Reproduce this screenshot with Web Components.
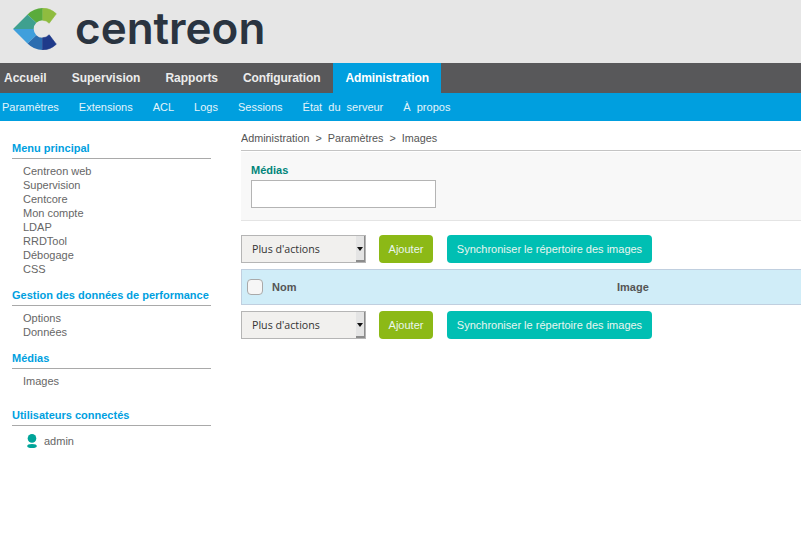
<!DOCTYPE html>
<html>
<head>
<meta charset="utf-8">
<title>Centreon</title>
<style>
    html, body { margin: 0; padding: 0; background: #fff; overflow: hidden; }
    body { font-family: "Liberation Sans", Arial, sans-serif; font-size: 11px; color: #4f4f4f; width: 801px; height: 545px; }
</style>
</head>
<body>
<app-shell>
    <brand-header slot="top"></brand-header>
    <main-nav slot="top"
        items="Accueil|Supervision|Rapports|Configuration|Administration" active="Administration"
        subitems="Paramètres|Extensions|ACL|Logs|Sessions|État  du  serveur|À  propos"></main-nav>
    <side-menu slot="side">
        <menu-group title="Menu principal" items="Centreon web|Supervision|Centcore|Mon compte|LDAP|RRDTool|Débogage|CSS"></menu-group>
        <menu-group title="Gestion des données de performance" items="Options|Données"></menu-group>
        <menu-group title="Médias" items="Images"></menu-group>
        <menu-group class="users" title="Utilisateurs connectés"><user-line>admin</user-line></menu-group>
    </side-menu>
    <media-page slot="main"></media-page>
</app-shell>

<script>
class AppShell extends HTMLElement {
    constructor() {
        super()
        this.attachShadow({ mode: 'open' }).innerHTML = `
            <style>
                :host { display: block; }
                .body { display: grid; grid-template-columns: 241px 560px; }
            </style>
            <slot name="top"></slot>
            <div class="body">
                <slot name="side"></slot>
                <slot name="main"></slot>
            </div>
        `
    }
}

class BrandHeader extends HTMLElement {
    constructor() {
        super()
        this.attachShadow({ mode: 'open' }).innerHTML = `
            <style>
                :host { display: flex; align-items: center; height: 63px; background: #e6e6e6; box-sizing: border-box; padding-left: 13px; }
                svg { display: block; width: 44px; height: 42px; margin-top: -5px; }
                span {
                    margin-left: 18px; margin-top: -8px;
                    font: 600 44px/1 "Inter", "Noto Sans", sans-serif;
                    letter-spacing: 0; color: #2a3440;
                }
            </style>
            <svg viewBox="13 8 44 42">
                <path fill="#8fbc3f" stroke="#8fbc3f" stroke-width=".6" stroke-linejoin="round" d="M42.5 8 A21 21 0 0 1 56.3 13.8 L49.2 23.2 A8.8 8.8 0 0 0 42.5 20.2 Z"/>
                <path fill="#5aab3c" d="M42.5 8 L42.5 20.2 A8.8 8.8 0 0 0 36.3 22.8 L27.5 14.5 Q34 8 42.5 8 Z"/>
                <path fill="#3fa08f" d="M27.5 14.5 L36.3 22.8 A8.8 8.8 0 0 0 33.7 29 L13 29 Z"/>
                <path fill="#3f9fdc" d="M13 29 L33.7 29 A8.8 8.8 0 0 0 36.3 35.2 L27.5 43.5 Z"/>
                <path fill="#2b6db0" d="M27.5 43.5 L36.3 35.2 A8.8 8.8 0 0 0 42.5 37.8 L42.5 50 Q34 50 27.5 43.5 Z"/>
                <path fill="#1f3a8a" stroke="#1f3a8a" stroke-width=".6" stroke-linejoin="round" d="M42.5 50 A21 21 0 0 0 56.3 44.2 L49.2 34.8 A8.8 8.8 0 0 1 42.5 37.8 Z"/>
            </svg>
            <span>centreon</span>
        `
    }
}

class MainNav extends HTMLElement {
    constructor() {
        super()
        this.attachShadow({ mode: 'open' }).innerHTML = `
            <style>
                :host { display: block; }
                .top { display: flex; height: 30px; background: #58585a; }
                .top a {
                    display: flex; align-items: center; padding: 0 12.5px;
                    font-weight: bold; font-size: 12px; color: #ececec; white-space: nowrap;
                }
                .top a:first-child { padding-left: 4px; }
                .top a:nth-child(4) { letter-spacing: -0.1px; }
                .top a.active { background: #009fdf; color: #fff; padding-right: 12px; letter-spacing: -0.08px; }
                .sub { display: flex; height: 28px; gap: 20px; padding-left: 2px; align-items: center; background: #009fdf; }
                .sub a { color: #e3f4fb; font-size: 11px; white-space: pre; }
            </style>
            <div class="top"></div>
            <div class="sub"></div>
        `
    }

    connectedCallback() {
        const active = this.getAttribute('active')
        const top = this.shadowRoot.querySelector('.top')
        const sub = this.shadowRoot.querySelector('.sub')
        this.getAttribute('items').split('|').forEach(name => {
            const a = document.createElement('a')
            a.textContent = name
            if (name === active) a.className = 'active'
            top.appendChild(a)
        })
        this.getAttribute('subitems').split('|').forEach(name => {
            const a = document.createElement('a')
            a.textContent = name
            sub.appendChild(a)
        })
    }
}

class SideMenu extends HTMLElement {
    constructor() {
        super()
        this.attachShadow({ mode: 'open' }).innerHTML = `
            <style>
                :host { display: flex; flex-direction: column; padding: 21px 30px 0 12px; }
            </style>
            <slot></slot>
        `
    }
}

class MenuGroup extends HTMLElement {
    constructor() {
        super()
        this.attachShadow({ mode: 'open' }).innerHTML = `
            <style>
                :host { display: block; margin-bottom: 13px; }
                :host(.users) { margin-top: 8px; }
                h4 {
                    margin: 0; padding-bottom: 3px; height: 13px; line-height: 13px;
                    font-size: 11px; font-weight: bold; color: #009fdf;
                    border-bottom: 1px solid #a9a9a9; white-space: nowrap;
                }
                ul { list-style: none; margin: 5px 0 0; padding: 0 0 0 11px; }
                li { height: 14px; line-height: 14px; color: #666; }
            </style>
            <h4></h4>
            <ul></ul>
            <slot></slot>
        `
    }

    connectedCallback() {
        this.shadowRoot.querySelector('h4').textContent = this.getAttribute('title')
        this.removeAttribute('title')
    }

    static get observedAttributes() {
        return ["items"]
    }

    attributeChangedCallback(name, oldValue, newValue) {
        const ul = this.shadowRoot.querySelector('ul')
        newValue.split('|').forEach(item => {
            const li = document.createElement('li')
            li.textContent = item
            ul.appendChild(li)
        })
    }
}

class UserLine extends HTMLElement {
    constructor() {
        super()
        this.attachShadow({ mode: 'open' }).innerHTML = `
            <style>
                :host { display: flex; align-items: center; gap: 7px; padding: 0 0 0 15px; color: #666; height: 14px; margin-top: 8px; }
                svg { width: 10px; height: 14px; }
            </style>
            <svg viewBox="0 0 10 14">
                <circle cx="5" cy="4.4" r="4.3" fill="#00a499"/>
                <ellipse cx="5" cy="12" rx="4.8" ry="2" fill="#00a499"/>
            </svg>
            <slot></slot>
        `
    }
}

class ActionBar extends HTMLElement {
    constructor() {
        super()
        this.attachShadow({ mode: 'open' }).innerHTML = `
            <style>
                :host { display: flex; align-items: center; gap: 13px; height: 28px; }
                .select {
                    position: relative; box-sizing: border-box; width: 125px; height: 28px;
                    display: flex; align-items: center; padding: 0 0 1px 10px;
                    background: #f1f0ee; border: 1px solid #b5b5b5;
                    font: 10.67px "Open Sans", sans-serif; color: #333;
                }
                .arrow {
                    position: absolute; right: 0; top: 0; bottom: 0; width: 9px;
                    background: #e4e4e4; border-right: 1px solid #8c8c8c; border-bottom: 2px solid #8c8c8c; box-sizing: border-box;
                }
                .arrow::after {
                    content: ""; position: absolute; left: 1px; top: 11px;
                    border: 3px solid transparent; border-top: 4px solid #111; border-bottom: 0;
                }
                button {
                    height: 28px; border: 0; border-radius: 4px; padding: 0;
                    font: 11px "Liberation Sans", sans-serif; color: #e9f6f0;
                }
                .add { width: 54px; background: #8cb916; }
                .sync { width: 205px; background: #00bfb3; margin-left: 1px; }
            </style>
            <div class="select">Plus d'actions<span class="arrow"></span></div>
            <button class="add">Ajouter</button>
            <button class="sync">Synchroniser le répertoire des images</button>
        `
    }
}

class MediaPage extends HTMLElement {
    constructor() {
        super()
        this.attachShadow({ mode: 'open' }).innerHTML = `
            <style>
                :host { display: block; padding-top: 11px; overflow: hidden; }
                .crumbs { height: 13px; line-height: 13px; padding-bottom: 5px; font-size: 10.8px; color: #555; white-space: pre; border-bottom: 1px solid #c4c4c4; }
                .filter {
                    box-sizing: border-box; height: 69px; margin-top: 1px; padding: 12px 10px 0;
                    background: #f8f8f8; border-bottom: 1px solid #e4e4e4;
                }
                label { display: block; height: 13px; line-height: 13px; margin-bottom: 3px; font-weight: bold; color: #00857a; }
                input { display: block; box-sizing: border-box; width: 185px; height: 28px; margin: 0; border: 1px solid #b4b4b4; background: #fff; }
                action-bar.first { margin-top: 14px; }
                .table-head {
                    box-sizing: border-box; display: flex; align-items: center; height: 36px; margin: 6px 0;
                    background: #d0edf8; border: 1px solid #c0cfdf; border-right: 0;
                    font-weight: bold; color: #555;
                }
                .check {
                    box-sizing: border-box; width: 16px; height: 16px; margin-left: 5px;
                    border: 1px solid #a9a9a9; border-radius: 4px; background: #f6f6f6;
                }
                .nom { margin-left: 9px; width: 345px; }
            </style>
            <div class="crumbs">Administration  &gt;  Paramètres  &gt;  Images</div>
            <div class="filter">
                <label>Médias</label>
                <input type="text">
            </div>
            <action-bar class="first"></action-bar>
            <div class="table-head">
                <span class="check"></span>
                <span class="nom">Nom</span>
                <span>Image</span>
            </div>
            <action-bar></action-bar>
        `
    }
}

customElements.define('app-shell', AppShell)
customElements.define('brand-header', BrandHeader)
customElements.define('main-nav', MainNav)
customElements.define('side-menu', SideMenu)
customElements.define('menu-group', MenuGroup)
customElements.define('user-line', UserLine)
customElements.define('action-bar', ActionBar)
customElements.define('media-page', MediaPage)
</script>
</body>
</html>
